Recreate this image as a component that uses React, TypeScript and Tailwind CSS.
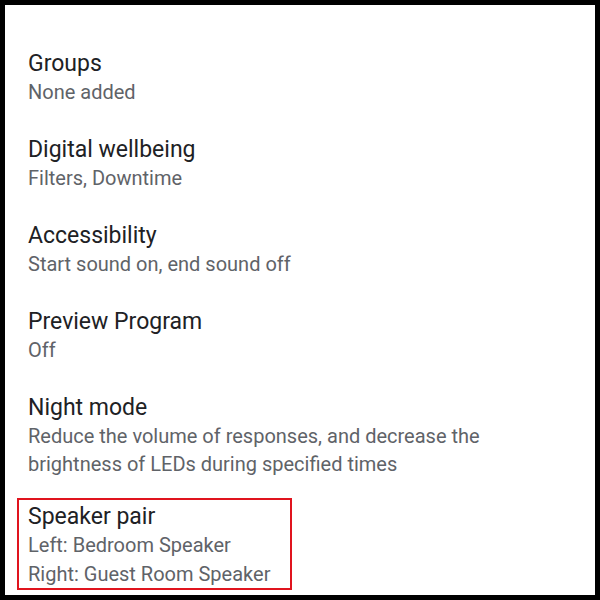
import React from 'react'

type Setting = {
  title: string
  lines: string[]
}

const settings: Setting[] = [
  { title: 'Groups', lines: ['None added'] },
  { title: 'Digital wellbeing', lines: ['Filters, Downtime'] },
  { title: 'Accessibility', lines: ['Start sound on, end sound off'] },
  { title: 'Preview Program', lines: ['Off'] },
  {
    title: 'Night mode',
    lines: ['Reduce the volume of responses, and decrease the', 'brightness of LEDs during specified times'],
  },
]

const SettingText = ({ title, lines, lineClass = 'leading-[28px]' }: Setting & { lineClass?: string }) => (
  <>
    <div className="text-[23px] leading-[28px] text-[#202124]">{title}</div>
    {lines.map((line) => (
      <div key={line} className={`text-[20px] ${lineClass} text-[#5f6368]`}>
        {line}
      </div>
    ))}
  </>
)

export default function App() {
  return (
    <div
      className="w-[600px] h-[600px] border-[5px] border-black bg-white overflow-hidden"
      style={{ fontFamily: 'Roboto, "Noto Sans", sans-serif' }}
    >
      <div className="pt-[45px] flex flex-col gap-[30px]">
        {settings.map((s) => (
          <div key={s.title} className="px-[23px]">
            <SettingText {...s} />
          </div>
        ))}
      </div>
      <div className="mt-[20px] ml-[12px] w-[275px] h-[92px] border-2 border-[#e0141e] pl-[9px] pt-[3px]">
        <SettingText
          title="Speaker pair"
          lines={['Left: Bedroom Speaker', 'Right: Guest Room Speaker']}
          lineClass="leading-[29px]"
        />
      </div>
    </div>
  )
}
